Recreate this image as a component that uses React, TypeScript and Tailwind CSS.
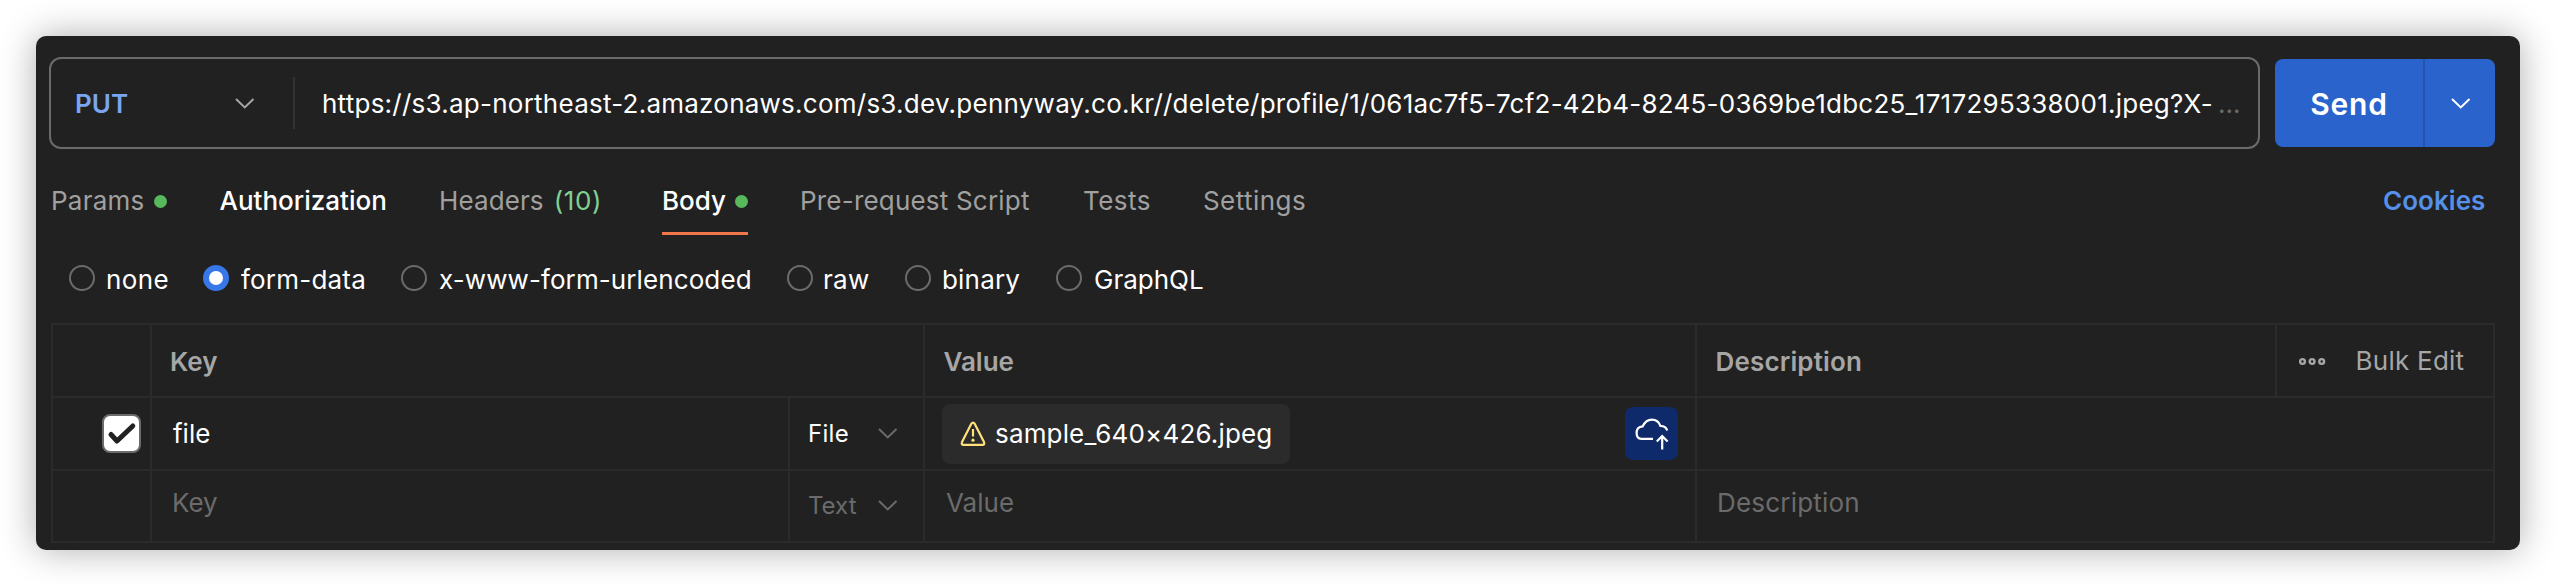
import { ReactNode } from "react";

function Chevron({ className }: { className: string }) {
  return (
    <svg width="20" height="12" viewBox="0 0 20 12" fill="none" stroke="currentColor" strokeWidth="2" className={`shrink-0 ${className}`}>
      <path d="M1 1 L9.75 9.4 L18.5 1" />
    </svg>
  );
}

function Dot() {
  return <span className="h-[13px] w-[13px] shrink-0 rounded-full bg-[#57b85c]" />;
}

function VLine() {
  return <div className="w-[2px] shrink-0 bg-[#2b2b2b]" />;
}

function HLine() {
  return <div className="h-[2px] shrink-0 bg-[#2b2b2b]" />;
}

function Tab({ width, children, className = "text-[#a0a0a0]" }: { width: string; children: ReactNode; className?: string }) {
  return <div className={`flex h-full shrink-0 items-center whitespace-nowrap ${width} ${className}`}>{children}</div>;
}

function Radio({ label, width, checked, className = "" }: { label: string; width: string; checked?: boolean; className?: string }) {
  return (
    <label className={`flex shrink-0 items-center gap-[11px] whitespace-nowrap ${width}`}>
      {checked ? (
        <span className="flex h-[26px] w-[26px] shrink-0 items-center justify-center rounded-full bg-[#3777e8]">
          <span className="h-[14px] w-[14px] rounded-full bg-white" />
        </span>
      ) : (
        <span className="h-[26px] w-[26px] shrink-0 rounded-full border-2 border-[#6b6b6b]" />
      )}
      <span className={`pt-[3px] ${className}`}>{label}</span>
    </label>
  );
}

export default function App() {
  return (
    <div className="h-[586px] w-[2556px] overflow-hidden bg-white p-9 font-['Inter',sans-serif] text-[26px] leading-8 text-white">
      <div className="h-[514px] w-[2484px] rounded-[10px] bg-[#212121] pl-[13px] pt-[21px] shadow-[0_0_36px_rgba(0,0,0,0.32)]">
        <div className="flex items-center">
          <div className="flex h-[92px] w-[2211px] items-center rounded-[12px] border-2 border-[#6b6b6b] pl-[24px]">
            <span className="w-[160px] pt-[2px] font-semibold text-[#7aa5f0]">PUT</span>
            <Chevron className="mt-[2px] text-[#a6a6a6]" />
            <span className="ml-[38px] h-[52px] w-[2px] bg-[#333333]" />
            <span className="ml-[27px] w-[1896px] whitespace-nowrap pt-[2px] tracking-[0.246px]">
              https://s3.ap-northeast-2.amazonaws.com/s3.dev.pennyway.co.kr//delete/profile/1/061ac7f5-7cf2-42b4-8245-0369be1dbc25_1717295338001.jpeg?X-
            </span>
            <span className="pt-[2px] text-[#6b6b6b]">…</span>
          </div>
          <div className="ml-[15px] flex h-[88px] w-[220px] overflow-hidden rounded-[8px] bg-[#2a63cc]">
            <span className="flex w-[148px] items-center justify-center pt-[2px] text-[30px] font-semibold tracking-[0.8px]">Send</span>
            <span className="w-[2px] bg-[#2454a9]" />
            <span className="flex w-[70px] items-center justify-center pl-[2px] pt-[2px]">
              <Chevron className="text-white" />
            </span>
          </div>
        </div>

        <div className="mt-[18px] flex h-[68px] pl-[2px]">
          <Tab width="w-[168.5px] gap-[9px] tracking-[0.25px]">Params<Dot /></Tab>
          <Tab width="w-[219.5px]" className="font-medium text-white">Authorization</Tab>
          <Tab width="w-[223px] gap-[10px] tracking-[0.1px]">
            Headers<span className="tracking-[0.6px] text-[#7fd093]">(10)</span>
          </Tab>
          <div className="mr-[52px] flex h-full w-[86px] shrink-0 flex-col justify-end">
            <div className="flex h-[65px] items-center justify-between whitespace-nowrap pt-[3px] font-medium">Body<Dot /></div>
            <div className="h-[3px] bg-[#f2764b]" />
          </div>
          <Tab width="w-[283px] tracking-[0.2px]">Pre-request Script</Tab>
          <Tab width="w-[120px] tracking-[0.45px]">Tests</Tab>
          <Tab width="w-[1180px] tracking-[0.44px]">Settings</Tab>
          <Tab width="w-[110px] tracking-[0.05px]" className="font-semibold text-[#5590ea]">Cookies</Tab>
        </div>

        <div className="mt-[27px] flex h-8 items-center pl-5">
          <Radio label="none" width="w-[134px]" className="tracking-[0.4px]" />
          <Radio label="form-data" width="w-[198px]" className="pl-[1px] tracking-[0.2px]" checked />
          <Radio label="x-www-form-urlencoded" width="w-[386px]" className="pl-[1px] tracking-[0.1px]" />
          <Radio label="raw" width="w-[118px]" className="-ml-[1px] tracking-[0.3px]" />
          <Radio label="binary" width="w-[151px]" className="tracking-[0.2px]" />
          <Radio label="GraphQL" width="w-[160px]" className="pl-[1px]" />
        </div>

        <div className="ml-[2px] mt-[29px] flex h-[220px] w-[2444px] flex-col border-2 border-[#2b2b2b]">
          <div className="flex h-[71px] shrink-0 font-semibold text-[#a6a6a6]">
            <div className="w-[97px]" />
            <VLine />
            <div className="flex w-[771px] items-center pl-[18px] pt-[2px]">Key</div>
            <VLine />
            <div className="flex w-[770px] items-center pl-[18.5px] pt-[2px]">Value</div>
            <VLine />
            <div className="flex w-[578px] items-center pl-[18.5px] pt-[2px] tracking-[0.15px]">Description</div>
            <VLine />
            <div className="flex items-center pl-[22px] font-normal">
              <svg width="27" height="10" viewBox="0 0 27 10" fill="none" stroke="#a6a6a6" strokeWidth="2.4">
                <circle cx="3.5" cy="5.5" r="2.4" />
                <circle cx="13.1" cy="5.5" r="2.4" />
                <circle cx="22.7" cy="5.5" r="2.4" />
              </svg>
              <span className="ml-[29.5px] tracking-[0.25px]">Bulk Edit</span>
            </div>
          </div>
          <HLine />
          <div className="flex h-[71px] shrink-0">
            <div className="flex w-[97px] items-center pl-[49px]">
              <span className="flex h-[39px] w-[39px] items-center justify-center rounded-[8px] border-2 border-[#6b6b6b] bg-white">
                <svg width="30" height="24" viewBox="0 0 30 24" fill="none" stroke="#212121" strokeWidth="5" strokeLinecap="round" strokeLinejoin="round">
                  <path d="M4 12.5 L10 19 L25.8 4" />
                </svg>
              </span>
            </div>
            <VLine />
            <div className="flex w-[636px] items-center pl-[21px]">file</div>
            <VLine />
            <div className="flex w-[133px] items-center pl-[18px] text-[24px]">
              <span className="w-[70px] pt-[1px] tracking-[0.3px]">File</span>
              <Chevron className="mt-[1px] text-[#6b6b6b]" />
            </div>
            <VLine />
            <div className="flex w-[770px] items-center justify-between px-[17px]">
              <div className="flex h-[60px] w-[348px] items-center rounded-[8px] bg-[#2b2b2b] pl-[18px]">
                <svg width="26" height="26" viewBox="0 0 26 26" fill="none" stroke="#ffe07a" strokeWidth="2.2" strokeLinejoin="round">
                  <path d="M11.2 2.9 Q13 0.2 14.8 2.9 L24 21 Q25 23.8 22.4 23.8 H3.6 Q1 23.8 2 21 Z" />
                  <path d="M13 8 V15.5" />
                  <circle cx="13" cy="19.2" r="1.6" fill="#ffe07a" stroke="none" />
                </svg>
                <span className="ml-[9px] pt-[1px] tracking-[0.16px]">sample_640×426.jpeg</span>
              </div>
              <div className="flex h-[53px] w-[53px] items-center justify-center rounded-[8px] bg-[#0e2a6b]">
                <svg width="34" height="34" viewBox="0 0 34 34" fill="none" stroke="white" strokeWidth="2.2">
                  <path d="M18 21.8 H6.2 C2.8 21.8 1.6 19 1.6 15.8 C1.6 12 4 9.8 7.6 9.4 C10 4.5 12.5 2.6 16.8 2.6 C21 2.6 24 4.8 25.4 8.9 C29.2 9 31.4 10.5 32.2 13.6" />
                  <path d="M27.2 32.5 V19.2 M21.8 24.6 L27.2 19 L32.6 24.6" />
                </svg>
              </div>
            </div>
            <VLine />
          </div>
          <HLine />
          <div className="flex h-[70px] shrink-0 text-[#6b6b6b]">
            <div className="w-[97px]" />
            <VLine />
            <div className="flex w-[636px] items-center pb-[6px] pl-5">Key</div>
            <VLine />
            <div className="flex w-[133px] items-center pl-[18px] text-[24px]">
              <span className="w-[70px]">Text</span>
              <Chevron className="text-[#6b6b6b]" />
            </div>
            <VLine />
            <div className="flex w-[770px] items-center pb-[6px] pl-[21px]">Value</div>
            <VLine />
            <div className="flex items-center pb-[6px] pl-5 tracking-[0.2px]">Description</div>
          </div>
        </div>
      </div>
    </div>
  );
}
